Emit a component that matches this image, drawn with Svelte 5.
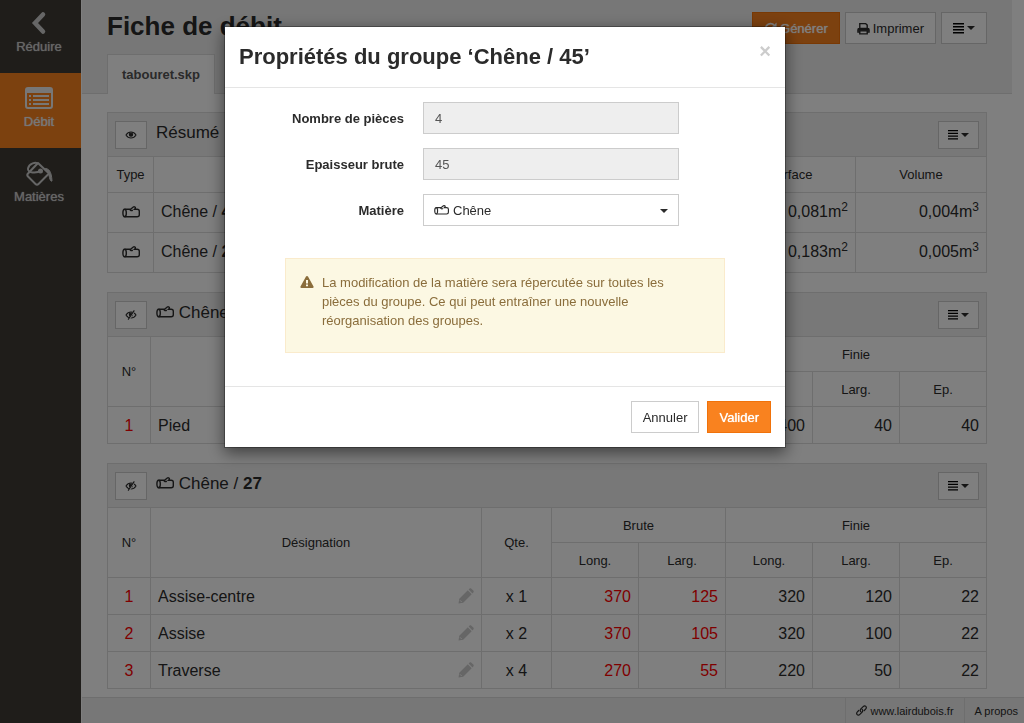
<script lang="ts">
	interface Part {
		id: number;
		name: string;
		count: number;
		raw: number[];
		finished: number[];
	}

	interface Group {
		material: string;
		thickness: number;
		parts: Part[];
	}

	const summary = [
		{ material: 'Chêne', thickness: 45, area: '0,081', volume: '0,004' },
		{ material: 'Chêne', thickness: 27, area: '0,183', volume: '0,005' },
	];

	const groups: Group[] = [
		{
			material: 'Chêne',
			thickness: 45,
			parts: [{ id: 1, name: 'Pied', count: 4, raw: [450, 45], finished: [400, 40, 40] }],
		},
		{
			material: 'Chêne',
			thickness: 27,
			parts: [
				{ id: 1, name: 'Assise-centre', count: 1, raw: [370, 125], finished: [320, 120, 22] },
				{ id: 2, name: 'Assise', count: 2, raw: [370, 105], finished: [320, 100, 22] },
				{ id: 3, name: 'Traverse', count: 4, raw: [270, 55], finished: [220, 50, 22] },
			],
		},
	];

	let material = $state('Chêne');
	let modalOpen = $state(true);

	function close() {
		modalOpen = false;
	}
</script>

{#snippet log()}
	<svg class="log" viewBox="0 0 18 12" aria-hidden="true">
		<ellipse cx="2.6" cy="7" rx="1.7" ry="3.8" />
		<path d="M2.6 3.200H8.500L11.300 1c1-.7 2.600.3 1.900 1.400L12.500 3.200h2.600c1.300 0 2.200.8 2.200 2v3.600c0 1.200-.9 2-2.200 2H2.600M7.800 3.200c.3 1.300 1.700 1.800 3 1" />
	</svg>
{/snippet}

{#snippet eye(hidden: boolean)}
	<svg class="eye" viewBox="0 0 14 12" aria-hidden="true">
		<path d="M1 6c3-4.800 9-4.800 12 0-3 4.800-9 4.800-12 0z" />
		<circle cx="7" cy="5.500" r="2" class="pupil" />
		{#if hidden}
			<path d="M11.500 .5 4.500 11.500" class="gap" />
			<path d="M11 .5 3.500 11.500" />
		{/if}
	</svg>
{/snippet}

{#snippet menu()}
	<svg class="bars" viewBox="0 0 11 11" aria-hidden="true">
		<path d="M0 0h11v1.500H0zM0 3h11v1.500H0zM0 6h11v1.500H0zM0 9h11v1.500H0z" />
	</svg>
	<span class="caret"></span>
{/snippet}

<div class="app">
	<nav class="sidebar">
		<button>
			<svg viewBox="0 0 28 26" aria-hidden="true">
				<path d="M18 4.500 10 13l8 8.500" fill="none" stroke="currentColor" stroke-width="4.500" stroke-linecap="round" />
			</svg>
			Réduire
		</button>
		<button class="active">
			<svg viewBox="0 0 28 26" aria-hidden="true">
				<rect x="1" y="3" width="26" height="20" rx="2" fill="none" stroke="currentColor" stroke-width="2" />
				<path d="M1 4h26v4H1zM4 10h2v2H4zM8 10h16v2H8zM4 14h2v2H4zM8 14h16v2H8zM4 18h2v2H4zM8 18h16v2H8z" fill="currentColor" />
			</svg>
			Débit
		</button>
		<button>
			<svg viewBox="0 0 28 26" aria-hidden="true" fill="none" stroke="currentColor" stroke-width="2" stroke-linejoin="round">
				<path d="M13 3 24 13.500 13.500 24c-1 1-2 1-3 0L3 16.500c-1-1-1-2 0-3z" />
				<path d="M16 10c-4 4-14 3-13-1.500C4 3.500 11 1.500 13 4" />
				<circle cx="15.500" cy="11" r="1.500" fill="currentColor" />
				<path d="M19 8.500c5-.5 7.500 3 8 12.500-2 1-2.500-4-3.500-7.500z" fill="currentColor" stroke-width="1" />
			</svg>
			Matières
		</button>
	</nav>

	<div class="main">
		<div class="scroll">
			<header>
				<div class="toolbar">
					<h1>Fiche de débit</h1>
					<button class="btn primary">
						<svg class="icon" viewBox="0 0 14 14" aria-hidden="true">
							<path d="M12 9A5.300 5.300 0 1 1 10.800 3.200" fill="none" stroke="currentColor" stroke-width="2" />
							<path d="M13.500 .5v5.500H8z" />
						</svg>
						Générer
					</button>
					<button class="btn">
						<svg class="icon" viewBox="0 0 14 14" aria-hidden="true">
							<path d="M3 7V1.700h6.300L11 3.400V7M2.500 10.800H1V8.500C1 7.600 1.600 7 2.500 7h9c.9 0 1.500.6 1.500 1.500v2.300h-1.500M3 9.500h8v3.300H3z" fill="none" stroke="currentColor" stroke-width="1.500" />
							<path d="M1 7h12v2.500H1z" />
						</svg>
						Imprimer
					</button>
					<button class="btn" aria-label="Menu">{@render menu()}</button>
				</div>
				<div class="tabs">
					<a href="#tabouret">tabouret.skp</a>
				</div>
			</header>

			<section>
				<div class="heading">
					<button class="btn small toggle" aria-label="Afficher">{@render eye(false)}</button>
					<h2>Résumé</h2>
					<button class="btn small" aria-label="Menu">{@render menu()}</button>
				</div>
				<table class="summary">
					<colgroup>
						<col class="type" />
						<col />
						<col class="total" />
						<col class="total" />
					</colgroup>
					<thead>
						<tr><th>Type</th><th></th><th>Surface</th><th>Volume</th></tr>
					</thead>
					<tbody>
						{#each summary as row (row.thickness)}
							<tr>
								<td class="center">{@render log()}</td>
								<td>{row.material} / <b>{row.thickness}</b></td>
								<td class="num">{row.area}m<sup>2</sup></td>
								<td class="num">{row.volume}m<sup>3</sup></td>
							</tr>
						{/each}
					</tbody>
				</table>
			</section>

			{#each groups as group (group.thickness)}
				<section>
					<div class="heading">
						<button class="btn small toggle" aria-label="Masquer">{@render eye(true)}</button>
						<h2>{@render log()} {group.material} / <b>{group.thickness}</b></h2>
						<button class="btn small" aria-label="Menu">{@render menu()}</button>
					</div>
					<table>
						<colgroup>
							<col class="id" />
							<col />
							<col class="count" />
							<col class="dim" span="5" />
						</colgroup>
						<thead>
							<tr>
								<th rowspan="2">N°</th>
								<th rowspan="2">Désignation</th>
								<th rowspan="2">Qte.</th>
								<th colspan="2">Brute</th>
								<th colspan="3">Finie</th>
							</tr>
							<tr>
								<th>Long.</th>
								<th>Larg.</th>
								<th>Long.</th>
								<th>Larg.</th>
								<th>Ep.</th>
							</tr>
						</thead>
						<tbody>
							{#each group.parts as part (part.id)}
								<tr>
									<td class="center red">{part.id}</td>
									<td>
										<div class="name">
											{part.name}
											<button class="edit" aria-label="Modifier">
												<svg viewBox="0 0 16 16" aria-hidden="true">
													<path d="m.5 15.500.8-4.700L9.800 2.300l3.900 3.900-8.500 8.500z" />
													<path d="m10.600 1.500.8-.8c.6-.6 1.400-.6 2 0l1.900 1.900c.6.6.6 1.400 0 2l-.8.8z" />
													<path d="m2 12.300 1.700 1.700" class="cut" />
												</svg>
											</button>
										</div>
									</td>
									<td class="center">x {part.count}</td>
									{#each part.raw as size}
										<td class="num red">{size}</td>
									{/each}
									{#each part.finished as size}
										<td class="num">{size}</td>
									{/each}
								</tr>
							{/each}
						</tbody>
					</table>
				</section>
			{/each}
		</div>

		<footer>
			<a href="#site">
				<svg viewBox="0 0 12 12" aria-hidden="true" fill="none" stroke="currentColor" stroke-width="1.300" stroke-linecap="round">
					<path d="M5.500 7.500C4.300 6.500 4.300 5.500 5.300 4.300L7.800 1.800c1-1 2.200-1 2.900-.3.800.8.800 1.800-.2 2.900L9 6" />
					<path d="M6.500 4.500c1.200 1 1.200 2 .2 3.200l-2.500 2.500c-1 1-2.200 1-2.900.3-.8-.8-.8-1.800.2-2.900L3 6" />
				</svg>
				www.lairdubois.fr
			</a>
			<a href="#about">A propos</a>
		</footer>
	</div>
</div>

{#if modalOpen}
	<div class="backdrop">
		<div class="modal" role="dialog" aria-modal="true" aria-labelledby="modal-title">
			<div class="modal-header">
				<h3 id="modal-title">Propriétés du groupe ‘Chêne / 45’</h3>
				<button class="close" aria-label="Fermer" onclick={close}>×</button>
			</div>
			<div class="modal-body">
				<div class="form">
					<label for="count">Nombre de pièces</label>
					<input id="count" type="text" value="4" disabled />
					<label for="thickness">Epaisseur brute</label>
					<input id="thickness" type="text" value="45" disabled />
					<label for="material">Matière</label>
					<div class="select">
						{@render log()}
						<select id="material" bind:value={material}>
							<option>Chêne</option>
						</select>
						<span class="caret"></span>
					</div>
				</div>
				<div class="alert">
					<svg viewBox="0 0 14 12" aria-hidden="true">
						<path d="M7 0c.5 0 .8.2 1 .6l5.500 10c.4.7 0 1.400-.9 1.400H1.400c-.9 0-1.300-.7-.9-1.400l5.500-10C6.200.2 6.500 0 7 0z" />
						<path d="M6 4h2v3.500H6zM6 8.500h2v1.700H6z" fill="#fcf8e3" />
					</svg>
					<p>La modification de la matière sera répercutée sur toutes les pièces du groupe. Ce qui peut entraîner une nouvelle réorganisation des groupes.</p>
				</div>
			</div>
			<div class="modal-footer">
				<button class="btn" onclick={close}>Annuler</button>
				<button class="btn primary" onclick={close}>Valider</button>
			</div>
		</div>
	</div>
{/if}

<style>
	:global(body) {
		margin: 0;
		background: #fff;
		color: #2b2b2b;
		font: 13px/19px "Liberation Sans", Arial, sans-serif;
	}
	* {
		box-sizing: border-box;
	}
	button, input, select {
		font: inherit;
		color: inherit;
	}
	a {
		color: inherit;
		text-decoration: none;
	}
	h1, h2, h3, p {
		margin: 0;
	}

	.app {
		display: flex;
		height: 100vh;
	}

	.sidebar {
		flex: 0 0 81px;
		background: #3e3b35;
		color: #ccc;
	}
	.sidebar button {
		display: flex;
		flex-direction: column;
		align-items: center;
		width: 100%;
		padding: 12px 3px 15px 0;
		border: 0;
		background: none;
		line-height: 22px;
		text-shadow: 0 0 1px;
	}
	.sidebar button:first-child {
		padding-top: 10px;
	}
	.sidebar .active {
		background: #f9821f;
		color: #eee;
	}
	.sidebar svg {
		width: 28px;
		height: 26px;
	}

	.main {
		flex: 1;
		display: flex;
		flex-direction: column;
		min-width: 0;
		border-left: 1px solid #fff;
	}
	.scroll {
		flex: 1;
		min-height: 0;
		overflow-y: auto;
		scrollbar-width: none;
		padding-right: 12px;
	}

	header {
		display: flex;
		flex-direction: column;
		margin-bottom: 18px;
		padding: 12px 25px 0;
		background: #eee;
		border-bottom: 1px solid #ddd;
	}
	.toolbar {
		display: flex;
		gap: 5px;
		margin-bottom: 10px;
	}
	h1 {
		flex: 1;
		font-size: 26px;
		line-height: 28px;
	}
	.tabs {
		display: flex;
		margin-bottom: -1px;
	}
	.tabs a {
		padding: 10px 14px;
		border: 1px solid #ddd;
		border-bottom: 0;
		background: #fff;
		color: #555;
		font-weight: bold;
	}

	.btn {
		display: inline-flex;
		align-items: center;
		gap: 3px;
		height: 32px;
		padding: 0 11px;
		border: 1px solid #ccc;
		background: #fff;
	}
	.btn.primary {
		border-color: #f0720a;
		background: #f9821f;
		color: #fff;
		text-shadow: 0 0 1px;
	}
	.btn.small {
		height: 28px;
		padding: 0 9px;
	}
	.icon {
		width: 13px;
		height: 13px;
		fill: currentColor;
	}
	.bars {
		width: 11px;
		height: 11px;
	}
	.small .bars {
		width: 10px;
		height: 10px;
	}
	.caret {
		border: 4px solid transparent;
		border-top-color: currentColor;
		border-bottom: 0;
	}
	.eye {
		width: 12px;
		height: 10px;
		fill: none;
		stroke: currentColor;
		stroke-width: 1.3;
	}
	.eye .pupil {
		fill: currentColor;
	}
	.eye .gap {
		stroke: #fff;
		stroke-width: 2;
	}
	.log {
		width: 18px;
		height: 12px;
		fill: none;
		stroke: currentColor;
		stroke-width: 1.4;
	}

	section {
		margin: 0 25px 19px;
	}
	.heading {
		display: flex;
		align-items: center;
		height: 44px;
		padding: 0 7px;
		border: 1px solid #ddd;
		border-bottom: 0;
		background: #f0f0f0;
	}
	h2 {
		flex: 1;
		margin-left: 9px;
		padding-bottom: 3px;
		font-size: 17px;
		line-height: 20px;
		font-weight: normal;
	}

	table {
		width: 100%;
		table-layout: fixed;
		border-collapse: collapse;
	}
	th, td {
		height: 37px;
		padding: 0 7px;
		border: 1px solid #ddd;
		text-align: left;
		font-size: 16px;
	}
	th {
		height: 35px;
		font-size: 13px;
		font-weight: normal;
		text-align: center;
	}
	.summary th {
		height: 36px;
	}
	.summary td {
		height: 40px;
		padding-bottom: 3px;
	}
	.summary .log {
		vertical-align: -1px;
	}
	.id { width: 43px; }
	.type { width: 46px; }
	.count { width: 70px; }
	.dim { width: 87px; }
	.total { width: 131px; }
	td.center {
		text-align: center;
	}
	td.num {
		text-align: right;
	}
	.red {
		color: red;
	}
	sup {
		font-size: 12px;
		line-height: 0;
	}
	.name {
		display: flex;
		align-items: center;
		justify-content: space-between;
	}
	.edit {
		display: flex;
		padding: 0;
		border: 0;
		background: none;
	}
	.edit svg {
		width: 16px;
		height: 16px;
		fill: #ccc;
	}
	.edit .cut {
		stroke: #fff;
		stroke-width: 1;
	}

	footer {
		display: flex;
		justify-content: flex-end;
		height: 26px;
		border-top: 1px solid #ddd;
		background: #eee;
		font-size: 11px;
		line-height: 28px;
	}
	footer a {
		display: flex;
		align-items: center;
		gap: 3px;
		padding: 0 10px;
		border-left: 1px solid #ddd;
	}
	footer a:last-child {
		padding-right: 6px;
	}
	footer svg {
		width: 11px;
		height: 11px;
	}

	.backdrop {
		position: fixed;
		inset: 0;
		display: flex;
		justify-content: center;
		align-items: flex-start;
		padding: 26px 14px 26px 0;
		background: rgba(0, 0, 0, 0.5);
	}
	.modal {
		width: 562px;
		border: 1px solid rgba(0, 0, 0, 0.3);
		background: #fff;
		background-clip: padding-box;
		box-shadow: 0 5px 15px rgba(0, 0, 0, 0.5);
	}
	.modal-header {
		display: flex;
		justify-content: space-between;
		padding: 15px 14px;
		border-bottom: 1px solid #e5e5e5;
	}
	h3 {
		font-size: 22px;
		line-height: 30px;
	}
	.close {
		align-self: flex-start;
		padding: 0;
		border: 0;
		background: none;
		color: #ccc;
		font-size: 20px;
		font-weight: bold;
		line-height: 18px;
	}
	.modal-body {
		padding: 14px 15px 33px;
	}
	.form {
		display: grid;
		grid-template-columns: 164fr 256fr 72fr;
		gap: 14px 19px;
		align-items: center;
	}
	label {
		grid-column: 1;
		font-weight: bold;
		text-align: right;
	}
	input, select {
		width: 100%;
		height: 32px;
		padding: 0 11px;
		border: 1px solid #ccc;
		border-radius: 0;
		background: #fff;
	}
	input {
		background: #eee;
		color: #555;
	}
	.select {
		position: relative;
	}
	select {
		display: block;
		padding-left: 29px;
		appearance: none;
	}
	.select .log {
		position: absolute;
		top: 11px;
		left: 11px;
		width: 15px;
		height: 10px;
	}
	.select .caret {
		position: absolute;
		top: 15px;
		right: 11px;
	}
	.alert {
		display: flex;
		gap: 8px;
		margin: 32px 45px 0;
		padding: 14px 35px 22px 14px;
		border: 1px solid #faebcc;
		background: #fcf8e3;
		color: #8a6d3b;
	}
	.alert svg {
		flex: none;
		width: 14px;
		height: 12px;
		margin-top: 3px;
		fill: currentColor;
	}
	.modal-footer {
		display: flex;
		justify-content: flex-end;
		gap: 8px;
		padding: 14px;
		border-top: 1px solid #e5e5e5;
	}
</style>
